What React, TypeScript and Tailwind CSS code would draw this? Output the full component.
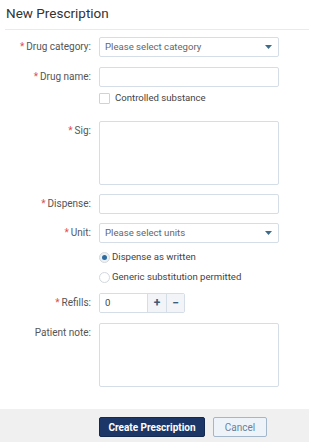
import React from "react";

const font = { fontFamily: "Roboto, 'Liberation Sans', sans-serif" };

function Label({ text, req, top }: { text: string; req?: boolean; top?: boolean }) {
  return (
    <div className={`w-[91px] shrink-0 text-right text-[10px] text-[#555] mr-[8px] leading-[20px] ${top ? "self-start" : ""}`}>
      {req && <span className="text-[#d9534f] mr-[2px]">*</span>}
      {text}
    </div>
  );
}

function Select({ placeholder }: { placeholder: string }) {
  return (
    <div className="w-[180px] h-[20px] border border-[#d5dde6] rounded-[2px] flex items-center justify-between pl-[5px] pr-[6px] bg-white">
      <span className="text-[9.6px] text-[#666]">{placeholder}</span>
      <svg width="7" height="4" viewBox="0 0 7 4">
        <path d="M0 0 L7 0 L3.5 4 Z" fill="#3d6b8c" />
      </svg>
    </div>
  );
}

function Input() {
  return <div className="w-[180px] h-[20px] border border-[#d5dde6] rounded-[2px] bg-white" />;
}

function Area() {
  return <div className="w-[180px] h-[64px] border border-[#d5dde6] rounded-[2px] bg-white" />;
}

export default function App() {
  return (
    <div className="w-[309px] h-[442px] bg-white flex flex-col" style={font}>
      <div className="pl-[6px] pt-[3px] h-[29px] text-[13.5px] text-[#333] leading-[20px]">New Prescription</div>
      <div className="ml-[5px] h-px bg-[#e8eaed]" />
      <div className="flex flex-col flex-1 pt-[7px]">
        <div className="flex items-center">
          <Label text="Drug category:" req />
          <Select placeholder="Please select category" />
        </div>
        <div className="flex items-center mt-[10px]">
          <Label text="Drug name:" req />
          <Input />
        </div>
        <div className="flex items-center mt-[6px] ml-[99px] h-[11px]">
          <div className="w-[11px] h-[11px] border border-[#ccd3db] rounded-[1px] bg-white" />
          <span className="ml-[5px] text-[9.6px] text-[#444]">Controlled substance</span>
        </div>
        <div className="flex mt-[17px]">
          <Label text="Sig:" req top />
          <Area />
        </div>
        <div className="flex items-center mt-[9px]">
          <Label text="Dispense:" req />
          <Input />
        </div>
        <div className="flex items-center mt-[9px]">
          <Label text="Unit:" req />
          <Select placeholder="Please select units" />
        </div>
        <div className="flex items-center mt-[7px] ml-[99px] h-[14px]">
          <div className="w-[11px] h-[11px] rounded-full border border-[#d3d8de] bg-[#eef1f4] flex items-center justify-center">
            <div className="w-[5px] h-[5px] rounded-full bg-[#2d6aa0]" />
          </div>
          <span className="ml-[2px] text-[9.6px] text-[#444]">Dispense as written</span>
        </div>
        <div className="flex items-center mt-[6px] ml-[99px] h-[14px]">
          <div className="w-[11px] h-[11px] rounded-full border border-[#d3d8de] bg-white" />
          <span className="ml-[2px] text-[9.6px] text-[#444]">Generic substitution permitted</span>
        </div>
        <div className="flex items-center mt-[9px]">
          <Label text="Refills:" req />
          <div className="flex h-[20px] border border-[#d5dde6] rounded-[2px] overflow-hidden">
            <div className="w-[47px] h-full bg-white text-[9.6px] text-[#444] pl-[5px] leading-[18px]">0</div>
            <div className="w-[19px] h-full bg-[#f2f4f7] border-l border-[#d5dde6] flex items-center justify-center text-[12px] font-bold text-[#3d5a78] leading-none">+</div>
            <div className="w-[18px] h-full bg-[#f2f4f7] border-l border-[#d5dde6] flex items-center justify-center text-[12px] font-bold text-[#3d5a78] leading-none">−</div>
          </div>
        </div>
        <div className="flex mt-[10px]">
          <Label text="Patient note:" top />
          <Area />
        </div>
      </div>
      <div className="h-[33px] bg-[#f0f0f0] flex items-start pt-[8px] pl-[99px]">
        <div className="w-[106px] h-[20px] bg-[#1b3667] border border-[#13294f] rounded-[2px] flex items-center justify-center text-[10px] font-bold text-white">
          Create Prescription
        </div>
        <div className="ml-[8px] w-[54px] h-[20px] bg-[#eef3fa] border border-[#a3b6ca] rounded-[2px] flex items-center justify-center text-[10px] text-[#6b8099]">
          Cancel
        </div>
      </div>
    </div>
  );
}
